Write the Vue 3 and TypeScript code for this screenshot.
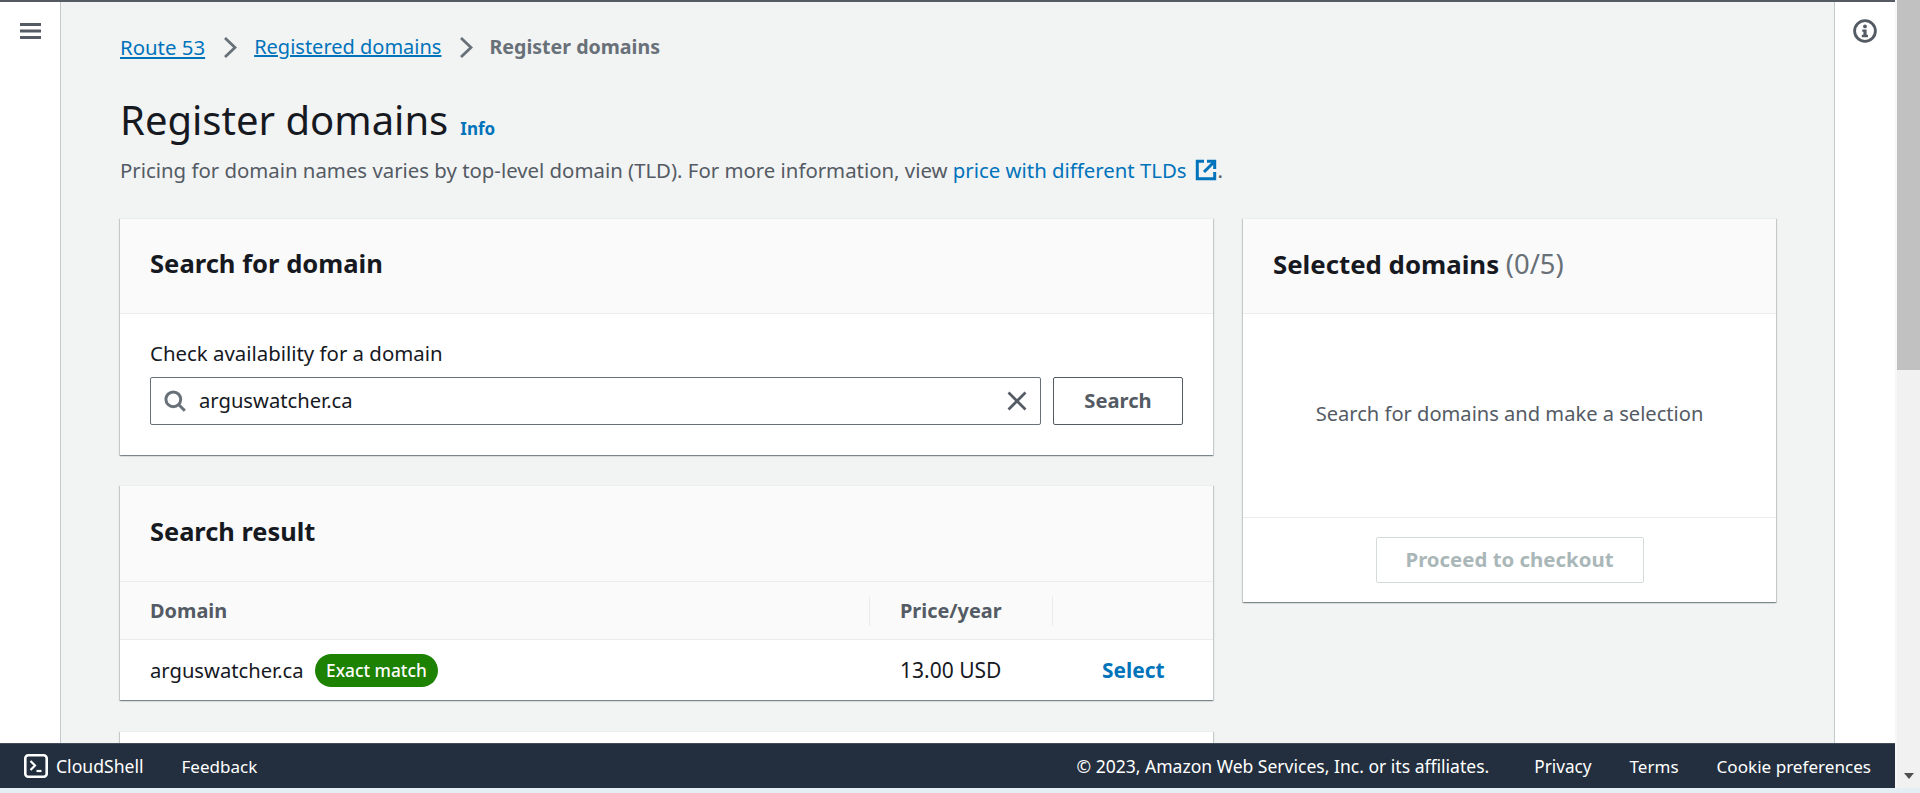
<script setup lang="ts">
const columns: string[] = ['Domain', 'Price/year']
</script>

<template>
  <div class="page">
    <div class="window">
      <div class="app">
        <div class="topline"></div>
        <div class="body">
          <aside class="nav">
            <svg class="burger" viewBox="0 0 21 16" width="21" height="16" fill="#545b64">
              <rect x="0" y="0" width="21" height="3" />
              <rect x="0" y="6.5" width="21" height="3" />
              <rect x="0" y="13" width="21" height="3" />
            </svg>
          </aside>
          <main class="main">
            <nav class="crumbs">
              <a class="link crumb-a">Route 53</a>
              <svg class="chev chev-a" viewBox="0 0 14 21" width="14" height="21" fill="none" stroke="#687078" stroke-width="2.8"><path d="M2 1l10 9.5L2 20" /></svg>
              <a class="link crumb-b">Registered domains</a>
              <svg class="chev chev-b" viewBox="0 0 14 21" width="14" height="21" fill="none" stroke="#687078" stroke-width="2.8"><path d="M2 1l10 9.5L2 20" /></svg>
              <span class="crumb-current">Register domains</span>
            </nav>
            <div class="title-row">
              <h1 class="title">Register domains</h1>
              <a class="info">Info</a>
            </div>
            <p class="desc">
              <span>Pricing for domain names varies by top-level domain (TLD). For more information, view </span>
              <a class="desc-link">price with different TLDs</a>
              <svg class="ext" viewBox="0 0 22 22" width="22" height="22" fill="none" stroke="#0073bb" stroke-width="3">
                <path d="M9 2.3H2.3v17.4h17.4V13" />
                <path d="M12 2.3h7.7V10" />
                <path d="M19.5 2.5L9 13" />
              </svg>
              <span>.</span>
            </p>
            <div class="layout">
              <div class="col">
                <section class="card card-search">
                  <header class="card-head"><h2 class="card-title t-search">Search for domain</h2></header>
                  <div class="search-body">
                    <label class="field-label">Check availability for a domain</label>
                    <div class="search-row">
                      <div class="input">
                        <svg class="search-ico" viewBox="0 0 22 22" width="22" height="22" fill="none" stroke="#687078" stroke-width="3">
                          <circle cx="9.3" cy="9.3" r="7.4" />
                          <path d="M14.8 14.8l6 6" />
                        </svg>
                        <span class="input-text">arguswatcher.ca</span>
                        <svg class="clear-ico" viewBox="0 0 20 20" width="20" height="20" fill="none" stroke="#545b64" stroke-width="2.7">
                          <path d="M1.5 1.5l17 17M18.5 1.5l-17 17" />
                        </svg>
                      </div>
                      <button class="btn-search">Search</button>
                    </div>
                  </div>
                </section>
                <section class="card">
                  <header class="card-head result-head"><h2 class="card-title t-result">Search result</h2></header>
                  <div class="table-head">
                    <div class="th th-domain">{{ columns[0] }}</div>
                    <div class="th th-price">{{ columns[1] }}</div>
                    <div class="th th-action"></div>
                  </div>
                  <div class="table-row">
                    <div class="td td-domain">
                      <span>arguswatcher.ca</span>
                      <span class="badge">Exact match</span>
                    </div>
                    <div class="td td-price">13.00 USD</div>
                    <div class="td td-action"><a class="select">Select</a></div>
                  </div>
                </section>
                <section class="card card-more"></section>
              </div>
              <section class="card card-selected">
                <header class="card-head"><h2 class="card-title t-selected">Selected domains <span class="count">(0/5)</span></h2></header>
                <div class="empty">Search for domains and make a selection</div>
                <div class="sel-foot"><button class="btn-proceed">Proceed to checkout</button></div>
              </section>
            </div>
          </main>
          <aside class="tools">
            <svg viewBox="0 0 24 24" width="24" height="24">
              <circle cx="12" cy="12" r="10.4" fill="none" stroke="#545b64" stroke-width="2.8" />
              <circle cx="12" cy="7.4" r="1.9" fill="#545b64" />
              <path d="M9.2 10.6h4.4v5.2h1.4v2.4H8.8v-2.4h1.6v-3H9.2z" fill="#545b64" />
            </svg>
          </aside>
        </div>
        <footer class="footer">
          <div class="foot-left">
            <svg viewBox="0 0 24 24" width="24" height="24" fill="none" stroke="#fff">
              <rect x="1.3" y="1.3" width="21.4" height="21.4" rx="3" stroke-width="2.6" />
              <path d="M6.5 7l4.5 4.5-4.5 4.5" stroke-width="2.2" />
              <path d="M12.5 17h5" stroke-width="2.2" />
            </svg>
            <span class="f-cloud">CloudShell</span>
            <span class="f-feedback">Feedback</span>
          </div>
          <div class="foot-right">
            <span class="f-copy">© 2023, Amazon Web Services, Inc. or its affiliates.</span>
            <span class="f-privacy">Privacy</span>
            <span class="f-terms">Terms</span>
            <span class="f-cookie">Cookie preferences</span>
          </div>
        </footer>
      </div>
      <div class="gutter"></div>
      <div class="scrollbar">
        <div class="thumb"></div>
        <div class="arrow"></div>
      </div>
    </div>
    <div class="strip"></div>
  </div>
</template>

<style>
html, body { margin: 0; padding: 0; overflow: hidden; }
</style>

<style scoped>
* { box-sizing: border-box; }
.page {
  width: 1920px;
  height: 793px;
  display: flex;
  flex-direction: column;
  font-family: "Noto Sans", "Open Sans", sans-serif;
  font-size: 20.2px;
  color: #16191f;
  overflow: hidden;
}
.window { flex: 1; display: flex; min-height: 0; }
.strip { height: 5px; background: #e3eff5; }
.app { width: 1895px; display: flex; flex-direction: column; }
.gutter { width: 2px; background: #f7f7f7; }
.scrollbar { width: 23px; background: #f1f1f1; display: flex; flex-direction: column; justify-content: space-between; align-items: center; }
.thumb { width: 100%; height: 370px; background: #c1c1c1; }
.arrow { width: 0; height: 0; border-left: 5px solid transparent; border-right: 5px solid transparent; border-top: 6px solid #505050; margin-bottom: 9px; }
.topline { height: 2px; background: #545b64; }
.body { flex: 1; display: flex; min-height: 0; overflow: hidden; }
.nav { width: 61px; background: #fff; border-right: 1px solid #c4c9cc; padding: 21px 0 0 20px; }
.burger { display: block; }
.tools { width: 61px; background: #fff; border-left: 1px solid #c4c9cc; padding: 17px 0 0 18px; }
.tools svg { display: block; }
.main { flex: 1; background: #f2f3f3; padding: 33px 58px 0 59px; min-width: 0; }
.crumbs { display: flex; align-items: center; height: 24px; line-height: 24px; }
.link { color: #0073bb; text-decoration: underline; }
.crumb-a { margin-right: 18px; font-size: 20.4px; }
.chev { display: block; flex: none; }
.chev-b { margin-left: 18px; margin-right: 16px; }
.crumb-b { margin-left: 17px; font-size: 20px; }
.crumb-current { font-weight: 700; color: #687078; font-size: 19.6px; }
.title-row { display: flex; align-items: baseline; margin-top: 38px; height: 46px; }
.title { margin: 0; font-size: 40px; line-height: 46px; font-weight: 400; color: #16191f; }
.info { margin-left: 12px; font-size: 17px; font-weight: 700; color: #0073bb; }
.desc { margin: 0; margin-top: 15px; display: flex; align-items: center; line-height: 24px; height: 24px; font-size: 20.36px; color: #545b64; white-space: pre; }
.desc-link { color: #0073bb; }
.ext { display: block; margin-left: 8px; margin-right: 1px; }
.layout { display: grid; grid-template-columns: 1093px 533px; column-gap: 30px; margin-top: 36px; align-items: start; }
.col { display: flex; flex-direction: column; gap: 30px; }
.card {
  background: #fff;
  border-top: 1px solid #eaeded;
  box-shadow: 0 1px 1px 0 rgba(0, 28, 36, .3), 1px 1px 1px 0 rgba(0, 28, 36, .15), -1px 1px 1px 0 rgba(0, 28, 36, .15);
}
.card-head { height: 95px; background: #fafafa; border-bottom: 1px solid #eaeded; padding: 0 0 4px 30px; display: flex; align-items: center; }
.result-head { height: 96px; padding-bottom: 5px; }
.card-title { margin: 0; font-weight: 700; color: #16191f; line-height: 32px; }
.t-search { font-size: 25.6px; }
.t-result { font-size: 25.4px; }
.t-selected { font-size: 25.8px; }
.count { font-weight: 400; color: #687078; font-size: 27.4px; }
.search-body { padding: 27px 30px 30px; height: 141px; }
.field-label { display: block; line-height: 24px; font-size: 20.4px; color: #16191f; }
.search-row { display: flex; gap: 12px; margin-top: 12px; }
.input { width: 891px; height: 48px; background: #fff; border: 1px solid #687078; border-radius: 2px; display: flex; align-items: center; padding: 0 13px; }
.search-ico { display: block; flex: none; }
.input-text { margin-left: 13px; flex: 1; color: #16191f; position: relative; top: -1px; }
.clear-ico { display: block; flex: none; }
.btn-search { width: 130px; height: 48px; background: #fff; border: 1px solid #545b64; border-radius: 2px; font: inherit; font-weight: 700; color: #545b64; padding-bottom: 3px; }
.table-head { display: grid; grid-template-columns: 749px 183px 161px; height: 58px; background: #fafafa; border-bottom: 1px solid #eaeded; align-items: center; }
.th { font-weight: 700; color: #545b64; height: 30px; line-height: 30px; padding-left: 30px; font-size: 19.9px; }
.th-price, .th-action { border-left: 1px solid #eaeded; }
.table-row { display: grid; grid-template-columns: 749px 183px 161px; height: 60px; align-items: center; }
.td-domain { padding-left: 30px; display: flex; align-items: center; gap: 11px; }
.td-price { padding-left: 31px; font-size: 21px; }
.td-action { padding-left: 50px; }
.badge { height: 33px; line-height: 33px; padding: 0 11.5px; border-radius: 17px; background: #1d8102; color: #fff; font-size: 17.3px; font-weight: 500; }
.select { color: #0073bb; font-weight: 700; font-size: 20.9px; }
.card-more { height: 60px; margin-top: 1px; }
.card-selected { height: 384px; }
.empty { height: 204px; display: flex; align-items: center; justify-content: center; color: #545b64; border-bottom: 1px solid #eaeded; font-size: 20.1px; padding-bottom: 5px; }
.sel-foot { display: flex; justify-content: center; padding-top: 19px; }
.btn-proceed { width: 268px; height: 46px; background: #fff; border: 1px solid #d5dbdb; border-radius: 2px; font: inherit; font-size: 20.4px; font-weight: 700; color: #aab7b8; padding-bottom: 3px; }
.footer { height: 45px; flex: none; background: #232f3e; border-top: 1px solid #424c59; color: #fff; font-size: 17px; display: flex; align-items: center; justify-content: space-between; padding-left: 24px; padding-right: 24px; }
.foot-left, .foot-right { display: flex; align-items: center; }
.f-cloud { margin-left: 8px; font-size: 17.6px; }
.f-feedback { margin-left: 38px; }
.f-copy { font-size: 17.55px; }
.f-privacy { margin-left: 45px; font-size: 17.2px; }
.f-terms { margin-left: 38px; }
.f-cookie { margin-left: 38px; font-size: 17.1px; }
</style>
